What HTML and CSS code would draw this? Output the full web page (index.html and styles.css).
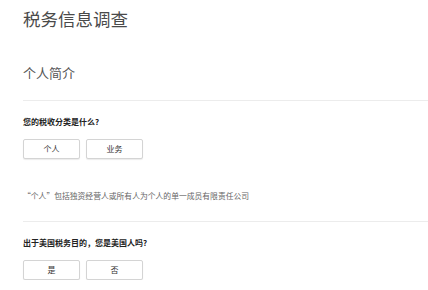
FILE: index.html
```html
<!DOCTYPE html>
<html lang="zh-CN">
<head>
<meta charset="utf-8">
<link rel="stylesheet" href="styles.css">
</head>
<body>
<main class="page">
  <h1 class="title">税务信息调查</h1>
  <h2 class="section-title">个人简介</h2>
  <section class="group">
    <p class="question">您的税收分类是什么?</p>
    <div class="choices">
      <button class="choice">个人</button>
      <button class="choice">业务</button>
    </div>
    <p class="note">“个人”包括独资经营人或所有人为个人的单一成员有限责任公司</p>
  </section>
  <section class="group">
    <p class="question">出于美国税务目的，您是美国人吗?</p>
    <div class="choices">
      <button class="choice">是</button>
      <button class="choice">否</button>
    </div>
  </section>
</main>
</body>
</html>
```
FILE: styles.css
```css
html, body {
  margin: 0;
  padding: 0;
  background: #fff;
}
body {
  font-family: "Noto Sans CJK SC", "Liberation Sans", sans-serif;
  color: #333;
}
.page {
  padding: 8px 0 0 23px;
}
.title {
  margin: 0;
  font-size: 17.5px;
  line-height: 21px;
  font-weight: 400;
  color: #4a4a4a;
}
.section-title {
  margin: 36px 0 0;
  font-size: 13px;
  line-height: 16px;
  font-weight: 400;
  color: #555;
}
.group {
  border-top: 1px solid #ececec;
  margin-top: 19px;
  padding-top: 16px;
}
.group + .group {
  margin-top: 20px;
}
.question {
  margin: 0;
  font-size: 8px;
  line-height: 10px;
  font-weight: 700;
  color: #222;
}
.choices {
  display: flex;
  gap: 6px;
  margin-top: 12px;
}
.choice {
  width: 57px;
  height: 20px;
  padding: 0;
  background: #fff;
  border: 1px solid #d4d4d4;
  border-radius: 2px;
  box-shadow: 0 1px 1px rgba(0, 0, 0, 0.08);
  font-family: inherit;
  font-size: 8px;
  line-height: 18px;
  color: #333;
}
.note {
  margin: 32px 0 0;
  font-size: 7.8px;
  line-height: 10px;
  color: #666;
}
```
